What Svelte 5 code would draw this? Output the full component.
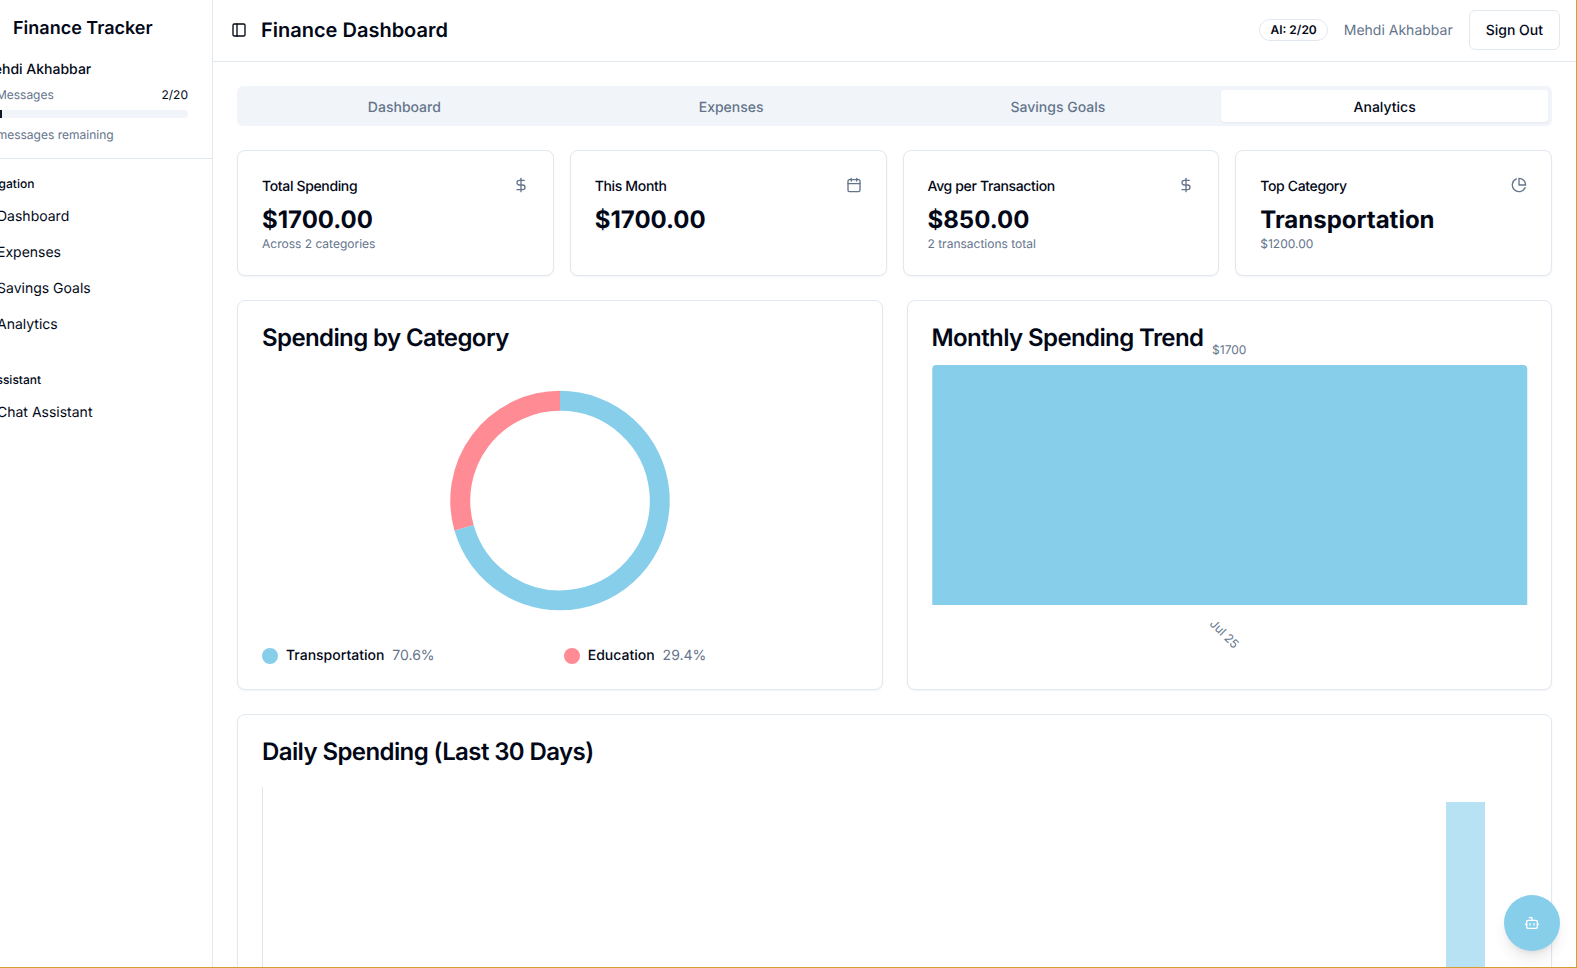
<script lang="ts">
  const tabs = ['Dashboard', 'Expenses', 'Savings Goals', 'Analytics'];
  const activeTab = 'Analytics';

  const navItems = ['Dashboard', 'Expenses', 'Savings Goals', 'Analytics'];

  const stats = [
    { title: 'Total Spending', value: '$1700.00', sub: 'Across 2 categories', icon: 'dollar' },
    { title: 'This Month', value: '$1700.00', sub: '', icon: 'calendar' },
    { title: 'Avg per Transaction', value: '$850.00', sub: '2 transactions total', icon: 'dollar' },
    { title: 'Top Category', value: 'Transportation', sub: '$1200.00', icon: 'pie' },
  ];

  const categories = [
    { name: 'Transportation', pct: 70.6, color: '#87ceeb' },
    { name: 'Education', pct: 29.4, color: '#ff8b94' },
  ];

  // donut arcs, clockwise from 12 o'clock
  const cx = 298.75;
  const cy = 151.6;
  const radius = 100;

  function point(deg: number) {
    const rad = (deg * Math.PI) / 180;
    return `${cx + radius * Math.sin(rad)} ${cy - radius * Math.cos(rad)}`;
  }

  let start = 0;
  const arcs = categories.map((c) => {
    const sweep = (c.pct / 100) * 360;
    const d = `M${point(start)}A${radius} ${radius} 0 ${sweep > 180 ? 1 : 0} 1 ${point(start + sweep)}`;
    start += sweep;
    return { d, color: c.color };
  });
</script>

<div class="shell">
  <aside class="sidebar">
    <h2 class="brand">Finance Tracker</h2>
    <div class="account">
      <div class="account-name">Mehdi Akhabbar</div>
      <div class="usage-row">
        <span>AI Messages</span>
        <span class="usage-count">2/20</span>
      </div>
      <div class="progress"><div class="progress-fill" style="width: 10%"></div></div>
      <div class="usage-note">18 messages remaining</div>
    </div>
    <nav class="nav">
      <div class="nav-label">Navigation</div>
      {#each navItems as item}
        <div class="nav-item">{item}</div>
      {/each}
      <div class="nav-label second">AI Assistant</div>
      <div class="nav-item">Chat Assistant</div>
    </nav>
  </aside>

  <div class="main">
    <header class="topbar">
      <button class="trigger" type="button" aria-label="Toggle sidebar">
        <svg class="icon" viewBox="0 0 24 24">
          <rect x="3" y="3" width="18" height="18" rx="2" />
          <path d="M9 3v18" />
        </svg>
      </button>
      <h1 class="page-title">Finance Dashboard</h1>
      <div class="topbar-right">
        <span class="badge">AI: 2/20</span>
        <span class="user">Mehdi Akhabbar</span>
        <button class="sign-out" type="button">Sign Out</button>
      </div>
    </header>

    <div class="content">
      <div class="tabs">
        {#each tabs as tab}
          <button class="tab" class:active={tab === activeTab} type="button">{tab}</button>
        {/each}
      </div>

      <div class="stats">
        {#each stats as stat}
          <div class="card stat">
            <div class="stat-head">
              <span class="stat-title">{stat.title}</span>
              <svg class="icon muted" viewBox="0 0 24 24">
                {#if stat.icon === 'dollar'}
                  <path d="M12 2v20" />
                  <path d="M17 5H9.5a3.5 3.5 0 0 0 0 7h5a3.5 3.5 0 0 1 0 7H6" />
                {:else if stat.icon === 'calendar'}
                  <path d="M8 2v4" />
                  <path d="M16 2v4" />
                  <rect x="3" y="4" width="18" height="18" rx="2" />
                  <path d="M3 10h18" />
                {:else}
                  <path d="M21.21 15.89A10 10 0 1 1 8 2.83" />
                  <path d="M22 12A10 10 0 0 0 12 2v10z" />
                {/if}
              </svg>
            </div>
            <div class="stat-value">{stat.value}</div>
            <div class="stat-sub">{stat.sub}</div>
          </div>
        {/each}
      </div>

      <div class="charts">
        <div class="card chart-card">
          <h3 class="card-title">Spending by Category</h3>
          <svg class="donut" viewBox="0 0 597 296">
            {#each arcs as arc}
              <path d={arc.d} fill="none" stroke={arc.color} stroke-width="20" />
            {/each}
          </svg>
          <div class="legend">
            {#each categories as c}
              <div class="legend-item">
                <span class="dot" style="background: {c.color}"></span>
                <span class="legend-name">{c.name}</span>
                <span class="legend-pct">{c.pct}%</span>
              </div>
            {/each}
          </div>
        </div>

        <div class="card chart-card">
          <h3 class="card-title">Monthly Spending Trend</h3>
          <svg class="trend" viewBox="0 0 595 316">
            <text class="tick" x="297" y="5" text-anchor="middle">$1700</text>
            <path d="M0 256V20a4 4 0 0 1 4-4H591a4 4 0 0 1 4 4V256z" fill="#87ceeb" />
            <text class="tick" x="292" y="289" text-anchor="middle" transform="rotate(45 292 285)">Jul 25</text>
          </svg>
        </div>
      </div>

      <div class="card daily">
        <h3 class="card-title">Daily Spending (Last 30 Days)</h3>
        <svg class="daily-chart" viewBox="0 0 1265 400">
          <path d="M.5 0V400" stroke="#e2e4ea" fill="none" />
          <rect x="1184" y="15" width="39" height="385" fill="#87ceeb" opacity="0.6" />
        </svg>
      </div>
    </div>
  </div>

  <button class="fab" type="button" aria-label="Open chat">
    <svg class="icon" viewBox="0 0 24 24">
      <path d="M12 8V4H8" />
      <rect x="4" y="8" width="16" height="12" rx="2" />
      <path d="M2 14h2" />
      <path d="M20 14h2" />
      <path d="M15 13v2" />
      <path d="M9 13v2" />
    </svg>
  </button>
</div>

<style>
  :global(body) {
    margin: 0;
    background: #fff;
    font-family: Inter, 'Liberation Sans', sans-serif;
    color: #020817;
    -webkit-font-smoothing: antialiased;
    text-rendering: geometricPrecision;
  }

  button {
    text-rendering: geometricPrecision;
  }

  .shell {
    position: relative;
    display: flex;
    box-sizing: border-box;
    height: 100vh;
    overflow: hidden;
    border-right: 1px solid #d69e2e;
    border-bottom: 1px solid #d69e2e;
  }

  .icon {
    display: block;
    width: 16px;
    height: 16px;
    fill: none;
    stroke: currentColor;
    stroke-width: 2;
    stroke-linecap: round;
    stroke-linejoin: round;
    flex-shrink: 0;
  }

  .muted {
    color: #64748b;
  }

  /* sidebar content runs past the left edge, as in the source page */
  .sidebar {
    width: 212px;
    flex-shrink: 0;
    border-right: 1px solid #e2e8f0;
    overflow: hidden;
  }

  .brand {
    margin: 15px 0 0 13px;
    font-size: 18px;
    line-height: 28px;
    font-weight: 600;
    white-space: nowrap;
  }

  .account {
    margin: 17px 0 0 -19px;
    width: 207px;
  }

  .account-name {
    font-size: 14px;
    line-height: 20px;
    font-weight: 500;
  }

  .usage-row {
    display: flex;
    justify-content: space-between;
    margin-top: 7px;
    font-size: 12px;
    line-height: 16px;
    color: #64748b;
  }

  .usage-count {
    color: #020817;
  }

  .progress {
    height: 8px;
    margin-top: 7px;
    border-radius: 999px;
    background: #f1f5f9;
    overflow: hidden;
  }

  .progress-fill {
    height: 100%;
    background: #0f172a;
  }

  .usage-note {
    margin-top: 9px;
    font-size: 12px;
    line-height: 16px;
    color: #64748b;
    white-space: nowrap;
  }

  .nav {
    margin-top: 15px;
    padding-top: 17px;
    border-top: 1px solid #e2e8f0;
  }

  .nav-label {
    margin: 0 0 8px -27px;
    font-size: 12px;
    line-height: 16px;
    font-weight: 500;
    white-space: nowrap;
  }

  .nav-label.second {
    margin-top: 32px;
  }

  .nav-item {
    height: 32px;
    margin: 0 0 4px -3px;
    font-size: 14px;
    line-height: 34px;
    white-space: nowrap;
  }

  .main {
    flex: 1;
    min-width: 0;
  }

  .topbar {
    display: flex;
    align-items: center;
    box-sizing: border-box;
    height: 62px;
    padding: 0 16px 1px 12px;
    border-bottom: 1px solid #e2e8f0;
  }

  .trigger {
    display: flex;
    align-items: center;
    justify-content: center;
    width: 28px;
    height: 28px;
    padding: 0;
    border: 0;
    background: none;
    color: #020817;
  }

  .page-title {
    margin: 0 0 0 8px;
    font-size: 20px;
    line-height: 28px;
    font-weight: 600;
  }

  .topbar-right {
    display: flex;
    align-items: center;
    gap: 16px;
    margin-left: auto;
  }

  .badge {
    padding: 2px 10px;
    border: 1px solid #e2e8f0;
    border-radius: 999px;
    font-size: 12px;
    line-height: 16px;
    font-weight: 600;
  }

  .user {
    padding-top: 2px;
    font-size: 14px;
    line-height: 20px;
    color: #64748b;
  }

  .sign-out {
    height: 40px;
    padding: 0 16px;
    border: 1px solid #e2e8f0;
    border-radius: 6px;
    background: #fff;
    color: #020817;
    font: 500 14px Inter, sans-serif;
  }

  .content {
    padding: 24px 24px 0;
  }

  .tabs {
    display: grid;
    grid-template-columns: repeat(4, 1fr);
    height: 40px;
    box-sizing: border-box;
    padding: 4px;
    border-radius: 6px;
    background: #f1f5f9;
  }

  .tab {
    padding: 2px 6px 0;
    border: 0;
    border-radius: 4px;
    background: none;
    color: #64748b;
    font: 500 14px Inter, sans-serif;
  }

  .tab.active {
    background: #fff;
    color: #020817;
    box-shadow: 0 1px 2px rgba(0, 0, 0, 0.05);
  }

  .card {
    box-sizing: border-box;
    border: 1px solid #e2e8f0;
    border-radius: 8px;
    background: #fff;
    box-shadow: 0 1px 2px rgba(0, 0, 0, 0.05);
  }

  .stats {
    display: grid;
    grid-template-columns: repeat(4, 1fr);
    gap: 16px;
    margin-top: 24px;
  }

  .stat {
    height: 126px;
    padding: 24px;
  }

  .stat-head {
    display: flex;
    align-items: center;
    justify-content: space-between;
    height: 20px;
    margin-bottom: 8px;
  }

  .stat-title {
    padding-top: 4px;
    font-size: 14px;
    line-height: 20px;
    font-weight: 500;
    letter-spacing: -0.35px;
  }

  .stat-value {
    padding-top: 1px;
    font-size: 24px;
    line-height: 32px;
    font-weight: 700;
  }

  .stat-sub {
    font-size: 12px;
    line-height: 16px;
    color: #64748b;
  }

  .charts {
    display: grid;
    grid-template-columns: repeat(2, 1fr);
    gap: 24px;
    margin-top: 24px;
  }

  .chart-card {
    height: 390px;
    padding: 24px;
  }

  .card-title {
    margin: 0 0 -1px;
    padding-top: 1px;
    font-size: 24px;
    line-height: 24px;
    font-weight: 600;
    letter-spacing: -0.6px;
  }

  .donut {
    display: block;
    width: 100%;
    height: 296px;
  }

  .legend {
    display: grid;
    grid-template-columns: repeat(2, 1fr);
    gap: 8px;
    margin-top: 1px;
  }

  .legend-item {
    display: flex;
    align-items: center;
    font-size: 14px;
    line-height: 20px;
  }

  .dot {
    width: 16px;
    height: 16px;
    margin-right: 8px;
    border-radius: 50%;
  }

  .legend-name {
    margin-right: 8px;
    font-weight: 500;
  }

  .legend-pct {
    color: #64748b;
  }

  .trend {
    display: block;
    width: 100%;
    height: 316px;
    overflow: visible;
  }

  .tick {
    font-size: 12px;
    fill: #64748b;
  }

  .daily {
    margin-top: 24px;
    padding: 24px;
  }

  .daily-chart {
    display: block;
    width: 100%;
    height: 400px;
    margin-top: 24px;
  }

  .fab {
    position: absolute;
    right: 16px;
    bottom: 16px;
    display: flex;
    align-items: center;
    justify-content: center;
    width: 56px;
    height: 56px;
    padding: 0;
    border: 0;
    border-radius: 50%;
    background: #87ceeb;
    color: #fff;
    box-shadow: 0 10px 15px -3px rgba(0, 0, 0, 0.1), 0 4px 6px -4px rgba(0, 0, 0, 0.1);
  }
</style>
